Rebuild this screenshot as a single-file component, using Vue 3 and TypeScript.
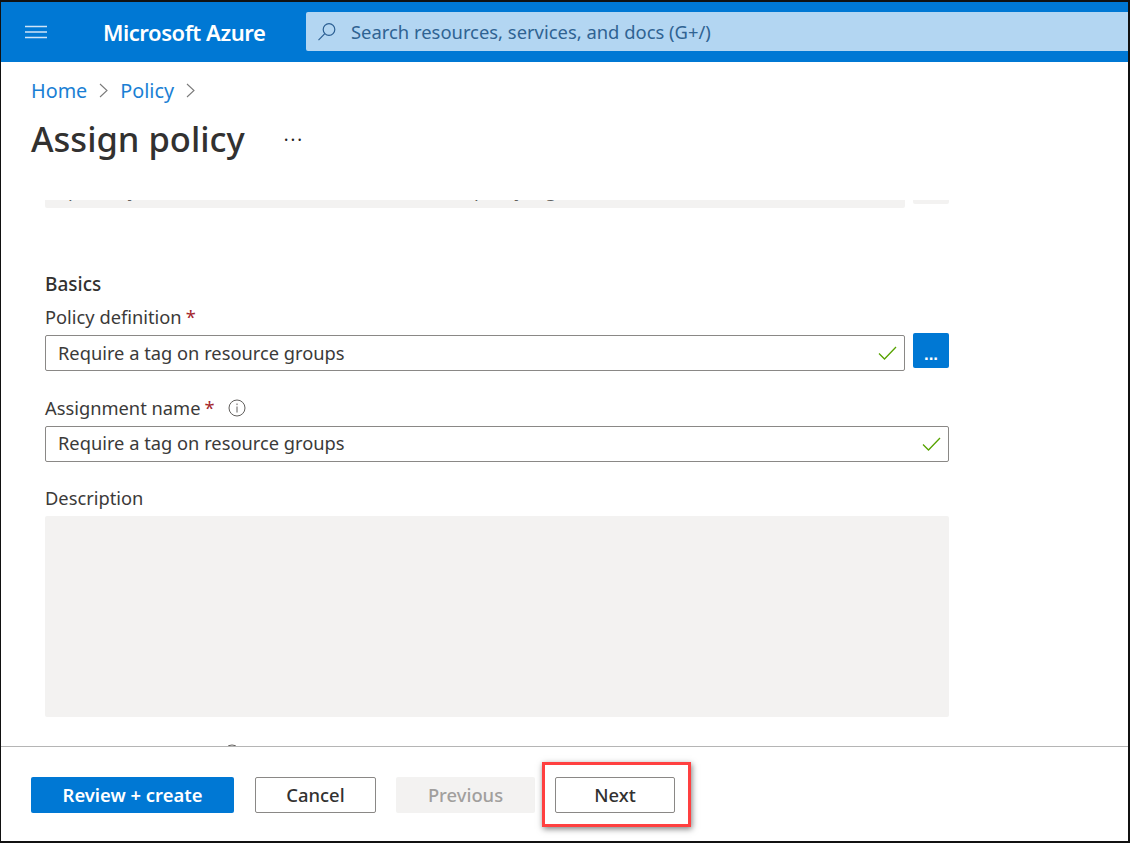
<script setup lang="ts">
const fieldText = 'Require a tag on resource groups'
</script>

<template>
  <div class="frame">
    <header class="topbar">
      <button class="menu" aria-label="Menu">
        <svg width="22" height="14" viewBox="0 0 22 14"><path d="M0 1.5h22M0 7h22M0 12.5h22" stroke="#cfe4f7" stroke-width="1.4" fill="none" /></svg>
      </button>
      <div class="brand">Microsoft Azure</div>
      <div class="search">
        <svg width="20" height="20" viewBox="0 0 20 20" fill="none" stroke="#2b5f93" stroke-width="1.2"><circle cx="12" cy="7.5" r="5.8" /><path d="M7.8 11.7L1.5 18.2" /></svg>
        <span>Search resources, services, and docs (G+/)</span>
      </div>
    </header>

    <nav class="crumbs">
      <a>Home</a>
      <svg class="chev" width="9" height="15" viewBox="0 0 9 15" fill="none" stroke="#7a7a7a" stroke-width="1.1"><path d="M1 1l7 6.5L1 14" /></svg>
      <a>Policy</a>
      <svg class="chev" width="9" height="15" viewBox="0 0 9 15" fill="none" stroke="#7a7a7a" stroke-width="1.1"><path d="M1 1l7 6.5L1 14" /></svg>
    </nav>

    <div class="title-row">
      <h1>Assign policy</h1>
      <span class="more">···</span>
    </div>

    <main class="scroller">
      <div class="scroll-inner">
        <div class="row top-row">
          <div class="disabled-input">Spend by the standard resource allocated to the policy tag</div>
          <div class="disabled-btn"></div>
        </div>

        <h2>Basics</h2>
        <label>Policy definition <em>*</em></label>
        <div class="row">
          <div class="input">
            <span>{{ fieldText }}</span>
            <svg class="check" width="19" height="14" viewBox="0 0 19 14" fill="none" stroke="#57a300" stroke-width="1.3"><path d="M1 7.5l5.5 5.5L18 1" /></svg>
          </div>
          <button class="dots-btn"><span>...</span></button>
        </div>

        <label class="second">Assignment name <em>*</em>
          <svg class="info" width="18" height="18" viewBox="0 0 18 18" fill="none" stroke="#605e5c"><circle cx="9" cy="9" r="8" /><path d="M9 7.5V13.5M9 4.5v1.6" /></svg>
        </label>
        <div class="input wide">
          <span>{{ fieldText }}</span>
          <svg class="check" width="19" height="14" viewBox="0 0 19 14" fill="none" stroke="#57a300" stroke-width="1.3"><path d="M1 7.5l5.5 5.5L18 1" /></svg>
        </div>

        <label class="third">Description</label>
        <div class="textarea"></div>

        <div class="fourth">
          <svg width="18" height="18" viewBox="0 0 18 18" fill="none" stroke="#605e5c"><circle cx="9" cy="9" r="8" /></svg>
        </div>
      </div>
    </main>

    <footer class="footer">
      <button class="btn primary">Review + create</button>
      <button class="btn cancel">Cancel</button>
      <button class="btn previous">Previous</button>
      <div class="next-wrap">
        <button class="btn next">Next</button>
        <div class="highlight"></div>
      </div>
    </footer>
  </div>
</template>

<style>
html, body { margin: 0; background: #fff; }
</style>

<style scoped>
.frame {
  box-sizing: border-box;
  width: 1130px;
  height: 843px;
  border: solid #111;
  border-width: 2px 2px 2px 1px;
  display: flex;
  flex-direction: column;
  font-family: "Noto Sans", "Liberation Sans", sans-serif;
  overflow: hidden;
  background: #fff;
}
.topbar {
  height: 60px;
  flex: none;
  background: #0078d4;
  display: flex;
  align-items: center;
}
.menu {
  width: 102px;
  padding: 0 0 0 24px;
  background: none;
  border: 0;
  text-align: left;
  line-height: 0;
}
.brand {
  width: 203px;
  color: #fff;
  font-size: 22px;
  font-weight: 600;
  letter-spacing: -0.45px;
}
.search {
  flex: 1;
  height: 39px;
  margin-top: -1px;
  background: #b3d6f2;
  border-radius: 2px 0 0 2px;
  display: flex;
  align-items: center;
  gap: 14px;
  padding-left: 11px;
  color: #2f6392;
  font-size: 18.4px;
}
.crumbs {
  flex: none;
  height: 57px;
  padding-left: 30px;
  display: flex;
  align-items: center;
  font-size: 19.8px;
  color: #1a7fd4;
}
.chev { margin: 0 12px 0 12px; }
.title-row {
  flex: none;
  height: 39px;
  padding-left: 30px;
  display: flex;
  align-items: center;
}
h1 {
  margin: 0;
  font-size: 34.5px;
  font-weight: 500;
  color: #323130;
}
.more {
  margin-left: 39px;
  font-size: 18px;
  font-weight: 400;
  letter-spacing: 2px;
  color: #222;
}
.scroller {
  flex: 1;
  min-height: 0;
  margin-top: 42px;
  overflow: hidden;
  padding-left: 44px;
  color: #323130;
}
.scroll-inner {
  width: 904px;
  margin-top: -28px;
}
.row {
  display: flex;
  gap: 8px;
}
.top-row {
  height: 36px;
  align-items: flex-start;
}
.disabled-input {
  flex: 1;
  height: 36px;
  box-sizing: border-box;
  padding: 0 13px 2px;
  display: flex;
  align-items: center;
  background: #f3f2f1;
  border-radius: 2px;
  font-size: 18.3px;
  color: #605e5c;
}
.disabled-btn {
  width: 36px;
  height: 32px;
  background: #f3f2f1;
  border-radius: 2px;
}
h2 {
  margin: 62px 0 0;
  font-size: 19px;
  line-height: 28px;
  font-weight: 500;
  color: #323130;
}
label {
  display: flex;
  align-items: center;
  gap: 4px;
  font-size: 18.3px;
  line-height: 28px;
  color: #3b3a39;
}
h2 + label { margin-top: 5px; }
label em {
  font-style: normal;
  color: #a4262c;
}
.input {
  box-sizing: border-box;
  flex: 1;
  height: 36px;
  margin-top: 4px;
  padding: 0 13px 2px 12px;
  border: 1px solid #8a8886;
  border-radius: 2px;
  display: flex;
  align-items: center;
  justify-content: space-between;
  font-size: 18.3px;
  color: #3b3a39;
}
.input.wide { padding-bottom: 4px; }
.check { margin: 2px -6px 0 0; }
.wide .check { margin-top: 4px; }
.dots-btn {
  width: 36px;
  height: 35px;
  margin-top: 2px;
  padding: 0;
  background: #0078d4;
  border: 0;
  border-radius: 2px;
  color: #fff;
  font-weight: 700;
  font-size: 17px;
  line-height: 1;
}
.dots-btn span { position: relative; top: 4px; }
.second { margin-top: 23px; }
.info { margin-left: 9px; }
.third { margin-top: 22px; }
.textarea {
  height: 201px;
  margin-top: 4px;
  background: #f3f2f1;
  border-radius: 2px;
}
.fourth {
  margin-top: 27px;
  padding-left: 178px;
}
.footer {
  flex: none;
  height: 95px;
  box-sizing: border-box;
  border-top: 1px solid #b5b5b5;
  padding: 30px 0 0 30px;
  display: flex;
  align-items: flex-start;
}
.btn {
  height: 36px;
  box-sizing: border-box;
  border-radius: 2px;
  font-family: inherit;
  font-size: 18.4px;
  font-weight: 500;
  padding: 0 0 2px;
}
.primary { width: 203px; background: #0078d4; border: 0; color: #fff; font-weight: 600; }
.cancel { width: 121px; margin-left: 21px; background: #fff; border: 1px solid #8a8886; color: #323130; }
.previous { width: 139px; margin-left: 20px; background: #f3f2f1; border: 0; color: #a19f9d; }
.next-wrap { position: relative; margin-left: 20px; }
.next { width: 120px; background: #fff; border: 1px solid #8a8886; color: #323130; }
.highlight {
  position: absolute;
  left: -13px;
  top: -15px;
  width: 149px;
  height: 65px;
  box-sizing: border-box;
  border: 3px solid #ff4040;
  box-shadow: 1px 2px 6px rgba(0, 0, 0, 0.5);
  pointer-events: none;
}
</style>
